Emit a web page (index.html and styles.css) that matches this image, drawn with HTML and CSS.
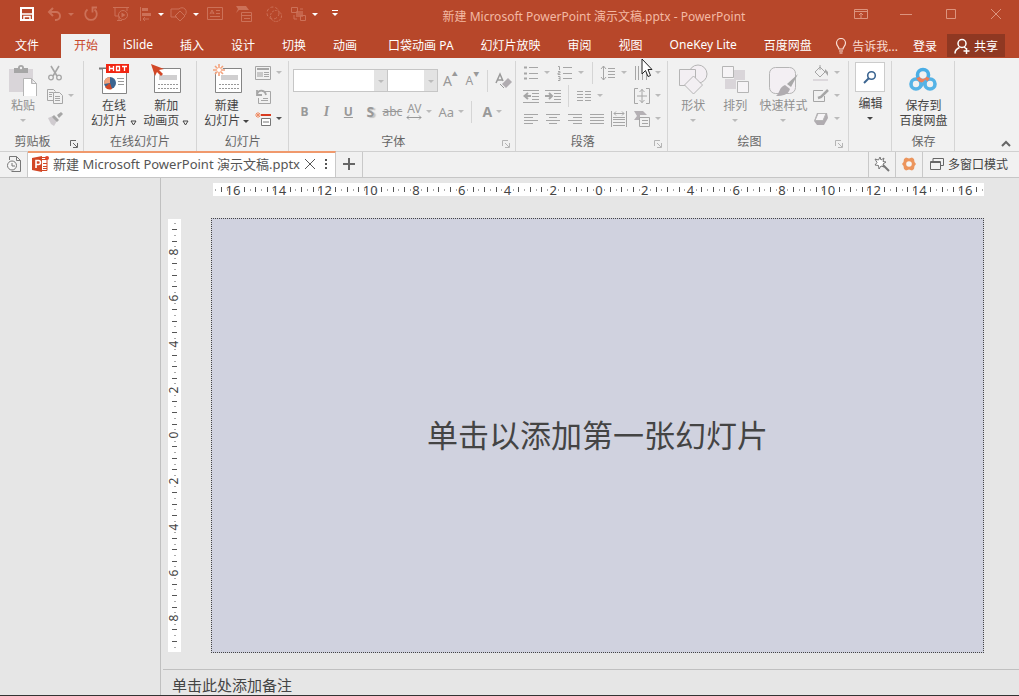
FILE: index.html
```html
<!DOCTYPE html>
<html lang="zh-CN">
<head>
    <meta charset="UTF-8">
    <meta name="viewport" content="width=device-width, initial-scale=1.0">
    <title>新建 Microsoft PowerPoint 演示文稿.pptx - PowerPoint</title>
    <link rel="stylesheet" href="styles.css">
</head>
<body>
    <header class="titlebar">
        <div class="quick">
            <button class="q q-save" aria-label="保存"><svg width="14" height="14" viewBox="0 0 14 14"><path d="M1 1h12v12H1z" fill="none" stroke="#fff" stroke-width="2"/><path d="M2 7h10M4 13V9.500h6V13" fill="none" stroke="#fff" stroke-width="1.500"/></svg></button>
            <button class="q q-drop" aria-label="撤消"><svg width="16" height="16" viewBox="0 0 16 16"><path d="M6 2L2 6l4 4M2 6h7a4 4 0 0 1 0 8H8" fill="none" stroke="currentColor" stroke-width="2"/></svg><i class="caret"></i></button>
            <button class="q" aria-label="恢复"><svg width="16" height="16" viewBox="0 0 16 16"><path d="M4.500 3.500a5.800 5.800 0 1 0 7 0" fill="none" stroke="currentColor" stroke-width="1.800"/><path d="M14 1.500H9.500V6.500" fill="none" stroke="currentColor" stroke-width="1.800"/></svg></button>
            <button class="q" aria-label="放映"><svg width="18" height="16" viewBox="0 0 18 16"><path d="M1 1.500h16M3 2v8h3M15 2v3M5 14.500h5M7 10v4" fill="none" stroke="currentColor"/><circle cx="11" cy="9" r="4.500" fill="none" stroke="currentColor"/><path d="M9.500 6.500l4 2.500-4 2.500z" fill="currentColor"/></svg></button>
            <button class="q q-drop lit" aria-label="对齐"><svg width="14" height="16" viewBox="0 0 14 16"><path d="M1.500 1v14" stroke="currentColor"/><path d="M3 2h6v3H3zM3 7h9v3H3z" fill="currentColor"/><path d="M10 13H4M6 11l-2 2 2 2" fill="none" stroke="currentColor"/></svg><i class="caret"></i></button>
            <button class="q q-drop lit" aria-label="形状"><svg width="18" height="16" viewBox="0 0 18 16"><path d="M7 11H1V3h8M9 3a4 4 0 1 1 6 6M10 5l5 5-5 5-5-5z" fill="none" stroke="currentColor"/></svg><i class="caret"></i></button>
            <button class="q" aria-label="文本框"><svg width="16" height="16" viewBox="0 0 16 16"><path d="M.500 1.500h15v12H.500zM3 8l2-4 2 4M4 7h3M9 4.500h4M9 7.500h4M3 10.500h10" fill="none" stroke="currentColor"/></svg></button>
            <button class="q" aria-label="版式"><svg width="16" height="16" viewBox="0 0 16 16"><path d="M0 0h10l3 4H3L0 7l2-4z" fill="currentColor"/><path d="M5.500 6.500h10v9h-10zM6 9.500h9M8 12.500h6" fill="none" stroke="currentColor"/></svg></button>
            <button class="q" aria-label="选择"><svg width="16" height="16" viewBox="0 0 16 16"><circle cx="7" cy="7" r="6" fill="none" stroke="currentColor" stroke-dasharray="3 2"/><circle cx="10" cy="10" r="5.500" fill="none" stroke="currentColor" stroke-dasharray="2 1"/></svg></button>
            <button class="q q-drop lit" aria-label="组合"><svg width="16" height="16" viewBox="0 0 16 16"><path d="M5 5h7v6H5z" fill="currentColor" opacity=".7"/><path d="M.500 1.500h6v5h-6zM9.500 9.500h5v5h-5zM9 3h3M3 9v4h3" fill="none" stroke="currentColor"/></svg><i class="caret"></i></button>
            <button class="q lit" aria-label="自定义快速访问工具栏"><i class="caret overline"></i></button>
        </div>
        <div class="doc-title">新建 Microsoft PowerPoint 演示文稿.pptx - PowerPoint</div>
        <div class="window-buttons">
            <button aria-label="功能区显示选项"><svg width="14" height="12" viewBox="0 0 14 12"><path d="M.500 1.500h13v9H.500zM1 3.500h12M7 10V5M5 7l2-2 2 2" fill="none" stroke="currentColor"/></svg></button>
            <button aria-label="最小化"><svg width="12" height="12" viewBox="0 0 12 12"><path d="M0 6.500h12" stroke="currentColor"/></svg></button>
            <button aria-label="最大化"><svg width="12" height="12" viewBox="0 0 12 12"><path d="M1.500 1.500h9v9h-9z" fill="none" stroke="currentColor"/></svg></button>
            <button aria-label="关闭"><svg width="12" height="12" viewBox="0 0 12 12"><path d="M1 1l10 10M11 1L1 11" stroke="currentColor"/></svg></button>
        </div>
    </header>

    <nav class="tabs">
        <button class="tab file">文件</button>
        <button class="tab active">开始</button>
        <button class="tab">iSlide</button>
        <button class="tab">插入</button>
        <button class="tab">设计</button>
        <button class="tab">切换</button>
        <button class="tab">动画</button>
        <button class="tab pocket">口袋动画 PA</button>
        <button class="tab">幻灯片放映</button>
        <button class="tab">审阅</button>
        <button class="tab">视图</button>
        <button class="tab">OneKey Lite</button>
        <button class="tab">百度网盘</button>
        <div class="account">
            <button class="tell"><svg width="12" height="16" viewBox="0 0 12 16"><path d="M4 11c0-2-2.500-3-2.500-6a4.500 4.500 0 0 1 9 0c0 3-2.500 4-2.500 6zM4 13h4M4.500 15h3" fill="none" stroke="currentColor" stroke-width="1.200"/></svg>告诉我...</button>
            <button class="login">登录</button>
            <button class="share"><svg width="16" height="16" viewBox="0 0 16 16"><circle cx="8" cy="5.500" r="4" fill="none" stroke="currentColor" stroke-width="1.500"/><path d="M1 15.500c0-3 2-5 4.500-6M10 9l2 1.500M12.500 10v6M9.500 13h6" fill="none" stroke="currentColor" stroke-width="1.500"/></svg>共享</button>
        </div>
    </nav>

    <section class="ribbon">
        <div class="group">
            <div class="group-body clipboard">
                <button class="big off paste">
                    <svg width="30" height="34" viewBox="0 0 30 34"><path d="M1 7h24v23H1z" fill="#d9d5d9"/><path d="M6 11V6h4a3 3 0 0 1 6 0h4v5z" fill="#a6a6a6"/><circle cx="13" cy="6" r="1.200" fill="#f1f1f1"/><path d="M15.500 16.500h8l5 5v13h-13zM23.500 16.500v5h5" fill="#fff" stroke="#b5b5b5"/></svg>
                    <span>粘贴</span>
                    <i class="caret"></i>
                </button>
                <div class="stack">
                    <button class="mini" aria-label="剪切"><svg width="16" height="16" viewBox="0 0 16 16"><path d="M4 1l6 10M12 1L6 11" stroke="currentColor" stroke-width="1.600"/><circle cx="4" cy="12.500" r="2.300" fill="none" stroke="currentColor" stroke-width="1.300"/><circle cx="12" cy="12.500" r="2.300" fill="none" stroke="currentColor" stroke-width="1.300"/></svg></button>
                    <button class="mini drop" aria-label="复制"><svg width="16" height="16" viewBox="0 0 16 16"><path d="M6 12.500H.500v-11h6l2 2M2 4.500h4M2 6.500h3M2 8.500h3M6.500 4.500h6l3 3v8h-9zM8 8.500h5M8 10.500h5M8 12.500h5" fill="none" stroke="currentColor"/></svg><i class="caret"></i></button>
                    <button class="mini" aria-label="格式刷"><svg width="16" height="16" viewBox="0 0 16 16"><path d="M1 7l5-2 4 5-3 5-3-2z" fill="#cfcbcf"/><path d="M7 4l5 5-2 2-5-5zM10 4l4-3 2 2-4 4z" fill="currentColor"/></svg></button>
                </div>
            </div>
            <div class="group-label"><span>剪贴板</span><button class="launcher" aria-label="剪贴板设置"><svg width="8" height="8" viewBox="0 0 8 8"><path d="M.500 6V.500H6M3 3l4 4M7.500 3v4.500H3" fill="none" stroke="currentColor"/></svg></button></div>
        </div>

        <div class="group">
            <div class="group-body">
                <button class="big">
                    <svg width="32" height="34" viewBox="0 0 32 34"><path d="M1 6.500h28" stroke="#777" stroke-width="2"/><path d="M4.500 7v24.500h24V7" fill="#fff" stroke="#858585"/><circle cx="12" cy="21" r="6" fill="#3c6591"/><path d="M12 21v-6a6 6 0 0 0-6 7z" fill="#f3a27c"/><path d="M12 21l-5 4a6 6 0 0 0 7 2z" fill="#d24726"/><path d="M19 16.500h7M20 19.500h6M20 22.500h6" stroke="#999"/><path d="M8 2h23v9H8z" fill="#f22613"/><path d="M11.500 4v5M15.500 4v5M11.500 6.500h4M18.500 4.500h3v4h-3zM24 4.500h5M26.500 4v5" fill="none" stroke="#fff" stroke-width="1.300"/></svg>
                    <span>在线</span>
                    <span>幻灯片 <svg class="tri" width="7" height="6" viewBox="0 0 7 6"><path d="M1 1h5L3.500 5z" fill="none" stroke="currentColor"/></svg></span>
                </button>
                <button class="big">
                    <svg width="32" height="34" viewBox="0 0 32 34"><path d="M4.500 6.500h26v24h-26z" fill="#fff" stroke="#858585"/><path d="M9 13h18v5H9z" fill="#d0cfd0"/><path d="M8 22.500h20M8 26.500h20" stroke="#999" stroke-dasharray="2 1"/><path d="M1 2l13 5-5 1 4 4-2 2-4-4-2 4z" fill="#d24726"/></svg>
                    <span>新加</span>
                    <span>动画页 <svg class="tri" width="7" height="6" viewBox="0 0 7 6"><path d="M1 1h5L3.500 5z" fill="none" stroke="currentColor"/></svg></span>
                </button>
            </div>
            <div class="group-label"><span>在线幻灯片</span></div>
        </div>

        <div class="group">
            <div class="group-body slides">
                <button class="big">
                    <svg width="32" height="34" viewBox="0 0 32 34"><path d="M4.500 6.500h26v24h-26z" fill="#fff" stroke="#858585"/><path d="M10 13h17v5H10z" fill="#d0cfd0"/><path d="M8 22.500h20M8 26.500h20" stroke="#999" stroke-dasharray="2 1"/><circle cx="8" cy="8" r="4" fill="#fff"/><path d="M8 2v12M2 8h12M4 4l8 8M12 4l-8 8" stroke="#f3a27c" stroke-width="1.600"/><circle cx="8" cy="8" r="2" fill="#fff"/></svg>
                    <span>新建</span>
                    <span>幻灯片 <i class="caret"></i></span>
                </button>
                <div class="stack">
                    <button class="mini drop" aria-label="版式"><svg width="16" height="16" viewBox="0 0 16 16"><path d="M.500 1.500h15v13H.500z" fill="none" stroke="currentColor"/><path d="M2 4h12" stroke="currentColor" stroke-width="2"/><path d="M2 7h6v5H2z" fill="#c8c8c8"/><path d="M9 7.500h5M9 9.500h5M9 11.500h5" stroke="currentColor"/></svg><i class="caret"></i></button>
                    <button class="mini" aria-label="重置"><svg width="16" height="16" viewBox="0 0 16 16"><path d="M7 3.500h8.500v12h-12V10M6 12.500h7M8 10.500h5" fill="none" stroke="currentColor"/><path d="M2 2v5h5M2 6c2-5 8-4 9 1" fill="none" stroke="currentColor" stroke-width="1.800"/></svg></button>
                    <button class="mini drop dark" aria-label="节"><svg width="16" height="16" viewBox="0 0 16 16"><path d="M6 4h10" stroke="#d83b20" stroke-width="2"/><path d="M6.500 7.500h9v7h-9z" fill="#fff" stroke="#777"/><path d="M8 11h6" stroke="#777"/><path d="M3 1v6M0 4h6M1 2l4 4M5 2L1 6" stroke="#f08c64"/></svg><i class="caret"></i></button>
                </div>
            </div>
            <div class="group-label"><span>幻灯片</span></div>
        </div>

        <div class="group">
            <div class="group-body rows">
                <div class="row">
                    <label class="combo family"><select aria-label="字体"><option></option></select><i class="caret"></i></label>
                    <label class="combo size"><select aria-label="字号"><option></option></select><i class="caret"></i></label>
                    <button class="letter grow" aria-label="增大字号">A<sup>▲</sup></button>
                    <button class="letter" aria-label="减小字号">A<sup>▼</sup></button>
                    <i class="sep"></i>
                    <button class="letter" aria-label="清除格式"><svg width="18" height="18" viewBox="0 0 18 18"><path d="M2 11L6 2l3 7M3.500 8H8" fill="none" stroke="currentColor" stroke-width="1.500"/><path d="M8 12l6-6 4 4-6 6z" fill="#b0acb0"/><path d="M6 12l4 4" stroke="currentColor"/></svg></button>
                </div>
                <div class="row">
                    <button class="letter"><b>B</b></button>
                    <button class="letter italic">I</button>
                    <button class="letter under"><b>U</b></button>
                    <button class="letter shadow"><b>S</b></button>
                    <button class="letter strike">abc</button>
                    <button class="letter wide" aria-label="字符间距"><span class="spacing">AV<svg width="16" height="5" viewBox="0 0 16 5"><path d="M1 2.500h14M3 .500l-2 2 2 2M13 .500l2 2-2 2" fill="none" stroke="currentColor"/></svg></span><i class="caret"></i></button>
                    <button class="letter wide case">Aa<i class="caret"></i></button>
                    <i class="sep"></i>
                    <button class="letter wide color"><b>A</b><i class="caret"></i></button>
                </div>
            </div>
            <div class="group-label"><span>字体</span><button class="launcher off" aria-label="字体设置"><svg width="8" height="8" viewBox="0 0 8 8"><path d="M.500 6V.500H6M3 3l4 4M7.500 3v4.500H3" fill="none" stroke="currentColor"/></svg></button></div>
        </div>

        <div class="group">
            <div class="group-body para">
                <div class="stack">
                    <div class="line">
                        <button class="mini drop" aria-label="项目符号"><svg width="16" height="16" viewBox="0 0 16 16"><path d="M1 2.500h3M1 8.500h3M1 13.500h3" stroke="currentColor" stroke-width="2"/><path d="M6 2.500h9M6 8.500h9M6 13.500h9" stroke="currentColor"/></svg><i class="caret"></i></button>
                        <button class="mini drop" aria-label="编号"><svg width="16" height="16" viewBox="0 0 16 16"><path d="M1 1.500h1.500V5M1 6.500h2v1.500H1v1.500h2.500M1 11.500h2v4H1M1.500 13.500H3M6 2.500h9M6 8.500h9M6 13.500h9" fill="none" stroke="currentColor"/></svg><i class="caret"></i></button>
                        <i class="sep"></i>
                        <button class="mini drop" aria-label="行距"><svg width="16" height="16" viewBox="0 0 16 16"><path d="M3.500 1v14M1 4l2.500-3L6 4M1 12l2.500 3L6 12M8 3.500h7M8 6.500h7M8 9.500h7M8 12.500h7" fill="none" stroke="currentColor"/></svg><i class="caret"></i></button>
                        <button class="mini drop" aria-label="文字方向"><svg width="16" height="16" viewBox="0 0 16 16"><path d="M1.500 1v14M4.500 1v14M8.500 1v14M12.500 5v10" fill="none" stroke="currentColor"/></svg><i class="caret"></i></button>
                    </div>
                    <div class="line">
                        <button class="mini" aria-label="降低列表级别"><svg width="16" height="16" viewBox="0 0 16 16"><path d="M0 2.500h16M9 5.500h7M9 8.500h7M9 11.500h7M0 14.500h16" stroke="currentColor"/><path d="M8 8H2M5 5L1.500 8 5 11" fill="none" stroke="currentColor" stroke-width="2"/></svg></button>
                        <button class="mini" aria-label="提高列表级别"><svg width="16" height="16" viewBox="0 0 16 16"><path d="M0 2.500h16M9 5.500h7M9 8.500h7M9 11.500h7M0 14.500h16" stroke="currentColor"/><path d="M0 8h6M4 5l3 3-3 3" fill="none" stroke="currentColor" stroke-width="2"/></svg></button>
                        <i class="sep"></i>
                        <button class="mini drop" aria-label="分栏"><svg width="16" height="16" viewBox="0 0 16 16"><path d="M1 3.500h6M1 6.500h6M1 9.500h6M1 12.500h6M9 3.500h6M9 6.500h6M9 9.500h6M9 12.500h6" stroke="currentColor"/></svg><i class="caret"></i></button>
                        <button class="mini drop last" aria-label="对齐文本"><svg width="16" height="16" viewBox="0 0 16 16"><path d="M4 .500H.500v15H4M12 .500h3.500v15H12M3 8h10M8 1v14M5.500 4L8 1.500 10.500 4M5.500 12L8 14.500l2.500-2.500" fill="none" stroke="currentColor"/></svg><i class="caret"></i></button>
                    </div>
                    <div class="line">
                        <button class="mini" aria-label="左对齐"><svg width="16" height="16" viewBox="0 0 16 16"><path d="M1 3.500h14M1 6.500h9M1 9.500h14M1 12.500h9" stroke="currentColor"/></svg></button>
                        <button class="mini" aria-label="居中"><svg width="16" height="16" viewBox="0 0 16 16"><path d="M1 3.500h14M4 6.500h8M1 9.500h14M4 12.500h8" stroke="currentColor"/></svg></button>
                        <button class="mini" aria-label="右对齐"><svg width="16" height="16" viewBox="0 0 16 16"><path d="M1 3.500h14M6 6.500h9M1 9.500h14M6 12.500h9" stroke="currentColor"/></svg></button>
                        <button class="mini" aria-label="两端对齐"><svg width="16" height="16" viewBox="0 0 16 16"><path d="M1 3.500h14M1 6.500h14M1 9.500h14M1 12.500h14" stroke="currentColor"/></svg></button>
                        <button class="mini" aria-label="分散对齐"><svg width="16" height="16" viewBox="0 0 16 16"><path d="M.500 0v16M15.500 0v16M3 2.500h10M5 .500l-2 2 2 2M11 .500l2 2-2 2M2 6.500h12M2 8.500h12M2 11.500h12M2 14.500h12" fill="none" stroke="currentColor"/></svg></button>
                        <button class="mini drop last" aria-label="转换为 SmartArt"><svg width="16" height="16" viewBox="0 0 16 16"><path d="M0 0h9l4 4H6v5H0l3-4z" fill="#b5b1b5"/><path d="M5.500 6.500h10v9h-10zM8 9.500h6M8 12.500h6" fill="#f1f1f1" stroke="currentColor"/></svg><i class="caret"></i></button>
                    </div>
                </div>
            </div>
            <div class="group-label"><span>段落</span><button class="launcher off" aria-label="段落设置"><svg width="8" height="8" viewBox="0 0 8 8"><path d="M.500 6V.500H6M3 3l4 4M7.500 3v4.500H3" fill="none" stroke="currentColor"/></svg></button></div>
        </div>

        <div class="group">
            <div class="group-body">
                <button class="big off">
                    <svg width="30" height="34" viewBox="0 0 30 34"><circle cx="20" cy="12" r="9" fill="#f3eff3" stroke="#b5b5b5"/><path d="M1.500 7.500h16v16h-16z" fill="#f3eff3" stroke="#b5b5b5"/><path d="M15.500 14l9 9-9 9-9-9z" fill="#f3eff3" stroke="#b5b5b5"/></svg>
                    <span>形状</span>
                    <i class="caret"></i>
                </button>
                <button class="big off">
                    <svg width="28" height="34" viewBox="0 0 28 34"><path d="M13 8h11v10H13zM4 17h11v10H4z" fill="#d9d5d9"/><path d="M1.500 4.500h11v11h-11zM16.500 19.500h11v11h-11z" fill="#f6f4f6" stroke="#b5b5b5"/></svg>
                    <span>排列</span>
                    <i class="caret"></i>
                </button>
                <button class="big off">
                    <svg width="32" height="34" viewBox="0 0 32 34"><rect x="2.500" y="5.500" width="26" height="26" rx="6" fill="#f3eff3" stroke="#b5b5b5"/><path d="M31 12l-7 13-4-3z" fill="#a8a8a8"/><path d="M18 23l5 4c-2 6-7 7-14 7 4-3 3-9 9-11z" fill="#b0acb0"/></svg>
                    <span>快速样式</span>
                    <i class="caret"></i>
                </button>
                <div class="stack">
                    <button class="mini drop" aria-label="形状填充"><svg width="16" height="16" viewBox="0 0 16 16"><path d="M2 7l5-5 5 5-5 5zM7 5V0" fill="none" stroke="currentColor"/><path d="M12 4l3 3v4l-3-4z" fill="currentColor"/><path d="M0 14h15v2H0z" fill="#dcd8dc"/></svg><i class="caret"></i></button>
                    <button class="mini drop" aria-label="形状轮廓"><svg width="16" height="16" viewBox="0 0 16 16"><path d="M10 2.500H.500v11h11V8" fill="none" stroke="currentColor"/><path d="M15 2l-7 7-3 1" fill="none" stroke="currentColor" stroke-width="2.500"/></svg><i class="caret"></i></button>
                    <button class="mini drop" aria-label="形状效果"><svg width="16" height="16" viewBox="0 0 16 16"><path d="M4 2h10l1 5-4 7H4L1 10z" fill="#b0acb0"/><path d="M5 2.500h8l-3 7H2z" fill="#f6f4f6" stroke="#b5b5b5"/></svg><i class="caret"></i></button>
                </div>
            </div>
            <div class="group-label"><span>绘图</span><button class="launcher off" aria-label="绘图设置"><svg width="8" height="8" viewBox="0 0 8 8"><path d="M.500 6V.500H6M3 3l4 4M7.500 3v4.500H3" fill="none" stroke="currentColor"/></svg></button></div>
        </div>

        <div class="group">
            <div class="group-body">
                <button class="big edit">
                    <span class="edit-box"><svg width="14" height="14" viewBox="0 0 14 14"><circle cx="8.500" cy="5.500" r="3.800" fill="none" stroke="#3c6591" stroke-width="1.600"/><path d="M6 8l-5 5" stroke="#3c6591" stroke-width="2"/></svg></span>
                    <span>编辑</span>
                    <i class="caret"></i>
                </button>
            </div>
            <div class="group-label"></div>
        </div>

        <div class="group">
            <div class="group-body">
                <button class="big">
                    <svg width="28" height="34" viewBox="0 0 28 34"><g fill="none" stroke-width="3.600"><circle cx="7" cy="22" r="5" stroke="#55b3e6"/><circle cx="21" cy="22" r="5" stroke="#55b3e6"/><circle cx="14" cy="13" r="5.500" stroke="#4aaee6"/><path d="M9 15.500a5.500 5.500 0 0 0 10 0" stroke="#ee7f5a"/><path d="M10.500 25.500l7-7" stroke="#55b3e6" stroke-width="3"/></g></svg>
                    <span>保存到</span>
                    <span>百度网盘</span>
                </button>
            </div>
            <div class="group-label"><span>保存</span></div>
        </div>
        <button class="collapse" aria-label="折叠功能区"><svg width="10" height="8" viewBox="0 0 10 8"><path d="M1 6l4-4 4 4" fill="none" stroke="currentColor" stroke-width="2"/></svg></button>
    </section>

    <div class="docbar">
        <button class="bar-button history" aria-label="历史文档"><svg width="16" height="18" viewBox="0 0 16 18"><path d="M3.500 5V1.500h7l4 4v11h-9M10.500 1.500v4h4" fill="none" stroke="#777"/><circle cx="6" cy="10.500" r="4.500" fill="#f6f6f6" stroke="#777"/><path d="M6 8v3h3" fill="none" stroke="#777"/></svg></button>
        <div class="doc-tab">
            <svg width="18" height="16" viewBox="0 0 18 16"><path d="M9 1.500h5M9 3.500h6v11H9M11 7.500h4M11 10.500h4M11 12.500h4" fill="none" stroke="#d24726"/><path d="M0 2l10-2v16L0 14z" fill="#d24726"/><path d="M4 12V4.500h2.500a2 2 0 0 1 0 4H4" fill="none" stroke="#fff" stroke-width="1.600"/><circle cx="15" cy="2" r="2" fill="#e0442a"/></svg>
            <span>新建 Microsoft PowerPoint 演示文稿.pptx</span>
            <button class="tab-x" aria-label="关闭文档"><svg width="12" height="12" viewBox="0 0 12 12"><path d="M1 1l10 10M11 1L1 11" stroke="currentColor"/></svg></button>
            <button aria-label="更多"><svg width="4" height="12" viewBox="0 0 4 12"><path d="M1 1h2v2H1zM1 5h2v2H1zM1 9h2v2H1z" fill="currentColor"/></svg></button>
        </div>
        <button class="bar-button" aria-label="新建文档"><svg width="12" height="12" viewBox="0 0 12 12"><path d="M6 0v12M0 6h12" stroke="#666" stroke-width="2"/></svg></button>
        <div class="bar-right">
            <button class="bar-button" aria-label="美化"><svg width="16" height="16" viewBox="0 0 16 16"><path d="M6 1l1 3 3-2-1 3.500 3 .500-3 2 1 3-3-1-2 3-.500-3.500L1 9l2-2.500L1 3l3.500 1z" fill="#fff" stroke="#777"/><path d="M9 9l6 6" stroke="#777" stroke-width="2"/></svg></button>
            <button class="bar-button" aria-label="设置"><svg width="16" height="16" viewBox="0 0 16 16"><path d="M5 1.500l3 1 3-1 2 1.500.500 3L15 8l-1.500 2-.500 3-2 1.500-3-1-3 1L3 13l-.500-3L1 8l1.500-2L3 3z" fill="#ec955d"/><circle cx="8" cy="8" r="2.800" fill="#f6f6f6"/></svg></button>
            <button class="bar-button multi"><svg width="14" height="12" viewBox="0 0 14 12"><path d="M3 3V.500h10.500v7H11M.500 3.500h10v8H.500zM1 4.500h9" fill="none" stroke="#666"/></svg>多窗口模式</button>
        </div>
    </div>

    <main class="workspace">
        <aside class="thumbs"></aside>
        <div class="editor">
            <div class="canvas">
                <div class="ruler ruler-h" data-from="-67" data-to="67"></div>
                <div class="ruler ruler-v" data-from="-37" data-to="37"></div>
                <button class="slide">单击以添加第一张幻灯片</button>
            </div>
            <div class="notes">单击此处添加备注</div>
        </div>
    </main>

    <svg class="pointer" width="12" height="20" viewBox="0 0 12 20"><path d="M1 1v15l3.500-3.500 2.500 6 2.500-1-2.500-6H11z" fill="#fff" stroke="#222"/></svg>

    <script src="script.js"></script>
</body>
</html>
```

FILE: styles.css
```css
* {
    box-sizing: border-box;
}
body {
    margin: 0;
    min-height: 100vh;
    display: flex;
    flex-direction: column;
    font-family: "Noto Sans", "Noto Sans CJK SC", sans-serif;
    font-size: 12px;
    color: #444;
    background: #e6e6e6;
}
button {
    margin: 0;
    padding: 0;
    border: 0;
    background: none;
    font: inherit;
    color: inherit;
    white-space: nowrap;
}
svg {
    display: block;
    flex: none;
}
.caret {
    flex: none;
    display: inline-block;
    border: 3px solid transparent;
    border-top-color: currentColor;
    border-bottom: 0;
}

/* title bar */
.titlebar {
    display: flex;
    align-items: center;
    height: 32px;
    padding-bottom: 4px;
    background: #b7472a;
    color: #f3b9a3;
}
.quick {
    display: flex;
    align-items: center;
    width: 350px;
    padding-left: 12px;
    color: #cc7158;
}
.q {
    display: flex;
    align-items: center;
    justify-content: center;
    width: 30px;
    height: 24px;
}
.q-save {
    margin-right: 3px;
}
.q-drop {
    width: 34px;
    gap: 5px;
}
.q.lit .caret {
    color: #fff;
}
.overline {
    position: relative;
}
.overline::before {
    content: "";
    position: absolute;
    left: -3px;
    top: -6px;
    width: 6px;
    height: 1px;
    background: #fff;
}
.doc-title {
    flex: 1;
    padding-top: 4px;
    text-align: center;
    white-space: nowrap;
}
.window-buttons {
    display: flex;
    width: 181px;
    color: #dc947e;
}
.window-buttons button {
    flex: 1;
    display: flex;
    align-items: center;
    justify-content: center;
    height: 24px;
}

/* ribbon tabs */
.tabs {
    display: flex;
    align-items: flex-end;
    height: 26px;
    background: #b7472a;
    color: #fff;
}
.tab {
    height: 24px;
    padding: 0 14px 3px 13px;
}
.tab.file {
    width: 61px;
    padding-right: 20px;
}
.tab.active {
    padding-right: 12px;
    background: #f1f1f1;
    color: #c8472a;
}
.tab.pocket {
    padding-left: 17px;
}
.account {
    display: flex;
    height: 24px;
    margin-left: auto;
    padding-right: 14px;
}
.account button {
    display: flex;
    align-items: center;
}
.tell {
    gap: 5px;
    color: #f9ddd3;
}
.login {
    padding: 0 10px 0 15px;
}
.share {
    gap: 4px;
    height: 23px;
    padding: 0 7px;
    background: #8f3822;
}

/* ribbon */
.ribbon {
    display: flex;
    height: 93px;
    padding-top: 3px;
    background: #f1f1f1;
}
.group {
    display: flex;
    flex-direction: column;
    border-right: 1px solid #d5d5d5;
}
.group-body {
    flex: 1;
    display: flex;
    padding: 0 4px;
}
.clipboard {
    gap: 2px;
    padding-right: 5px;
}
.slides {
    padding-right: 2px;
}
.para {
    padding-right: 2px;
}
.group-label {
    display: flex;
    height: 18px;
    line-height: 18px;
    color: #666;
}
.group-label span {
    flex: 1;
    text-align: center;
}
.launcher {
    display: flex;
    align-items: center;
    justify-content: center;
    width: 18px;
    padding-top: 4px;
}
.launcher.off {
    color: #b5b5b5;
}
.big {
    display: flex;
    flex-direction: column;
    align-items: center;
    min-width: 42px;
    padding: 1px 3px 0;
    line-height: 15px;
}
.big svg {
    margin-bottom: 2px;
}
.big > .caret {
    margin-top: 6px;
}
.big .caret {
    vertical-align: middle;
}
.big .tri {
    display: inline-block;
    margin: 0;
    vertical-align: -1px;
}
.big.off {
    color: #8f8f8f;
}
.big.off .caret {
    color: #bbb;
}
.paste {
    min-width: 38px;
}
.edit {
    min-width: 34px;
    padding: 1px 2px 0;
}
.edit-box {
    display: flex;
    align-items: center;
    justify-content: center;
    width: 30px;
    height: 30px;
    margin-bottom: 4px;
    border: 1px solid #ccc;
    background: #fff;
}
.edit-box svg {
    margin: 0;
}
.stack {
    display: flex;
    flex-direction: column;
}
.line {
    display: flex;
    align-items: center;
}
.mini {
    display: flex;
    align-items: center;
    gap: 5px;
    width: 22px;
    height: 23px;
    padding: 0 3px;
    color: #a6a6a6;
}
.mini.drop {
    width: 34px;
}
.mini .caret {
    color: #bbb;
}
.mini.dark .caret {
    color: #555;
}
.mini.last {
    margin-left: auto;
}
.sep {
    width: 1px;
    height: 22px;
    margin: 0 4px;
    background: #d5d5d5;
}
.rows {
    flex-direction: column;
    padding: 4px 1px 0 4px;
}
.row {
    display: flex;
    align-items: center;
    height: 31px;
}
.combo {
    position: relative;
    height: 23px;
    border: 1px solid #c6c6c6;
}
.combo + .combo {
    margin-left: -1px;
}
.combo.family {
    width: 95px;
}
.combo.size {
    width: 51px;
    margin-right: 1px;
}
.combo select {
    appearance: none;
    display: block;
    width: 100%;
    height: 21px;
    border: 0;
    border-right: 13px solid #e3e3e3;
    border-radius: 0;
    background: #fff;
}
.combo .caret {
    position: absolute;
    right: 3px;
    top: 10px;
    color: #bbb;
}
.letter {
    display: flex;
    align-items: center;
    justify-content: center;
    width: 22px;
    height: 24px;
    color: #999;
}
.letter .caret {
    color: #bbb;
}
.grow {
    font-size: 14px;
}
.letter sup {
    align-self: flex-start;
    font-size: 6px;
}
.italic {
    font-family: "Liberation Serif", serif;
    font-size: 14px;
    font-style: italic;
    font-weight: bold;
}
.under {
    text-decoration: underline;
}
.shadow {
    font-size: 14px;
    text-shadow: 2px 1px 1px #c4c4c4;
}
.strike {
    text-decoration: line-through;
}
.letter.wide {
    gap: 4px;
    width: 32px;
}
.spacing {
    line-height: 12px;
}
.case {
    font-size: 13px;
}
.color {
    font-size: 14px;
}
.collapse {
    align-self: flex-end;
    margin-left: auto;
    padding: 0 8px 3px 0;
    color: #666;
}

/* document tabs */
.docbar {
    display: flex;
    height: 27px;
    border-top: 1px solid #d0d0d0;
    border-bottom: 1px solid #c6c6c6;
    background: #f1f1f1;
}
.bar-button {
    display: flex;
    align-items: center;
    justify-content: center;
    width: 27px;
    padding-bottom: 2px;
    border-right: 1px solid #c9c9c9;
}
.history {
    width: 28px;
}
.doc-tab {
    display: flex;
    align-items: center;
    margin-top: -1px;
    padding: 0 7px 3px 4px;
    border-top: 2px solid #f0996c;
    border-right: 1px solid #c9c9c9;
    background: #fff;
    color: #555;
    font-size: 13px;
    line-height: 20px;
    white-space: nowrap;
}
.doc-tab span {
    margin-left: 3px;
}
.tab-x {
    margin: 0 8px 0 4px;
}
.bar-right {
    display: flex;
    margin-left: auto;
    border-left: 1px solid #c9c9c9;
}
.multi {
    gap: 4px;
    width: auto;
    padding: 0 11px 2px 7px;
    border-right: 0;
}

/* slide editor */
.workspace {
    flex: 1;
    display: flex;
    border-bottom: 1px solid #333;
}
.thumbs {
    width: 161px;
    border-right: 1px solid #c0c0c0;
}
.editor {
    flex: 1;
    display: flex;
    flex-direction: column;
}
.canvas {
    flex: 1;
    display: grid;
    grid-template: 13px 1fr / 13px 1fr;
    gap: 22px 30px;
    padding: 5px 35px 16px 7px;
}
.ruler {
    display: flex;
    background: #fff;
}
.ruler-h {
    grid-column: 2;
    margin-left: 2px;
}
.ruler-v {
    flex-direction: column;
    margin: 1px 0;
    padding: 2px 0;
}
.tick {
    flex: 1 1 0;
    min-width: 0;
    min-height: 0;
    display: flex;
    align-items: center;
    justify-content: center;
    font-size: 13px;
    line-height: 12px;
}
.mark {
    flex: none;
    width: 1px;
    height: 2px;
    background: #aaa;
}
.mark.half {
    height: 5px;
    background: #555;
}
.ruler-v .tick {
    font-size: 12px;
}
.ruler-v .mark {
    width: 2px;
    height: 1px;
}
.ruler-v .mark.half {
    width: 5px;
}
.ruler-v .num {
    transform: rotate(-90deg);
}
.slide {
    padding-bottom: 4px;
    border: 1px dotted #444;
    background: #d0d2df;
    font-size: 31px;
}
.notes {
    height: 26px;
    margin-left: 2px;
    padding-left: 9px;
    border-top: 1px solid #c0c0c0;
    font-size: 15px;
    line-height: 30px;
    overflow: hidden;
}
.pointer {
    position: absolute;
    left: 641px;
    top: 58px;
}
```

FILE: script.js
```js
// one cell per quarter unit, a number on every second unit
document.querySelectorAll('.ruler').forEach(ruler => {
    const from = Number(ruler.dataset.from);
    const to = Number(ruler.dataset.to);
    for (let i = from; i <= to; i++) {
        const tick = document.createElement('div');
        tick.className = 'tick';
        const item = document.createElement('span');
        if (i % 8 === 0) {
            item.className = 'num';
            item.textContent = Math.abs(i / 4);
        } else {
            item.className = i % 2 === 0 ? 'mark half' : 'mark';
        }
        tick.appendChild(item);
        ruler.appendChild(tick);
    }
});
```
